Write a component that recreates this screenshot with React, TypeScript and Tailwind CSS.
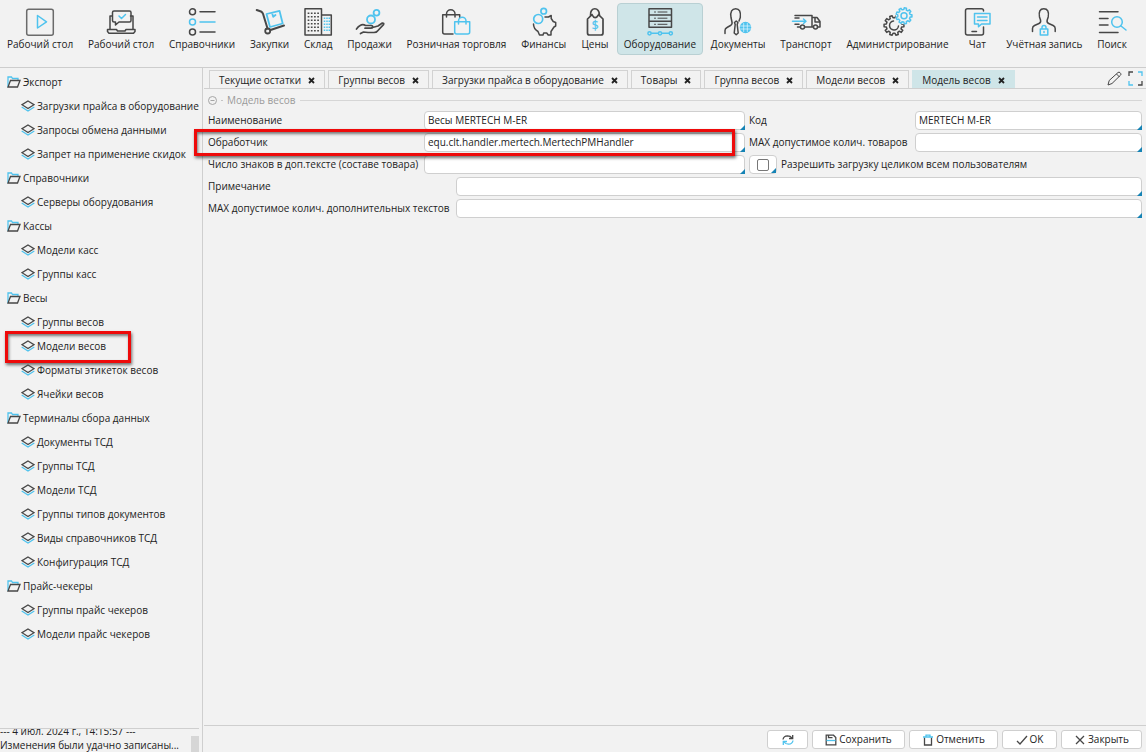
import { ReactNode } from "react";
import clsx from "clsx";

const DARK = "#474747";
const BLUE = "#4fc3ee";

const gearPath = (cx: number, cy: number, r: number, teeth: number) => {
  const inner = r * 0.78;
  const step = (Math.PI * 2) / teeth;
  const points: string[] = [];
  for (let i = 0; i < teeth; i++) {
    const a = i * step;
    [
      [inner, -0.3],
      [r, -0.2],
      [r, 0.2],
      [inner, 0.3],
    ].forEach(([radius, shift]) => {
      const t = a + shift * step;
      points.push(
        `${(cx + radius * Math.cos(t)).toFixed(2)} ${(cy + radius * Math.sin(t)).toFixed(2)}`
      );
    });
  }
  return `M${points.join("L")}Z`;
};

const ToolIcon = ({ children }: { children: ReactNode }) => (
  <svg
    viewBox="0 0 28 28"
    className="h-7 w-7 overflow-visible"
    fill="none"
    stroke={DARK}
    strokeWidth="1.5"
    strokeLinecap="round"
    strokeLinejoin="round"
    aria-hidden="true"
  >
    {children}
  </svg>
);

interface ITool {
  label: string;
  icon: ReactNode;
  active?: boolean;
}

const tools: ITool[] = [
  {
    label: "Рабочий стол",
    icon: (
      <>
        <rect x="0.7" y="1.2" width="26.6" height="26" rx="2" stroke="#6b6b6b" />
        <path d="M11.5 7.5v12.5l9-6.2z" stroke={BLUE} />
      </>
    ),
  },
  {
    label: "Рабочий стол",
    icon: (
      <>
        <path d="M5 8H3v13M23.5 8H26v13M.5 21.5h9l1 1.5h7.500l1-1.500H28v2L26.500 25.300H2L.5 23.500z" />
        <path d="M7 3h15.500q1.500 0 1.500 1.500v8q0 1.500-1.500 1.500H12l-3.500 3v-3H7q-1.500 0-1.500-1.500v-8Q5.500 3 7 3z" />
        <path d="M12 8l2.500 2.500L18.500 6.500" stroke={BLUE} />
      </>
    ),
  },
  {
    label: "Справочники",
    icon: (
      <>
        <circle cx="4.500" cy="3.800" r="3" />
        <path d="M12 3.800h15" />
        <circle cx="4.500" cy="13.900" r="3" stroke={BLUE} />
        <path d="M12 13.900h15" stroke={BLUE} />
        <circle cx="4.500" cy="24" r="3" />
        <path d="M12 24h15" />
      </>
    ),
  },
  {
    label: "Закупки",
    icon: (
      <>
        <path d="M.7 2L5 3.500q1.500.7 2 2.200L11.500 20.500M14.500 22L28 17.500" strokeWidth="2" />
        <circle cx="11.700" cy="23" r="2.500" strokeWidth="1.800" />
        <path d="M10.500 6l13-3.200 3.200 12.700L14 19zM16 4.800l1.200 4 2.300-1.800" stroke={BLUE} strokeWidth="1.800" />
      </>
    ),
  },
  {
    label: "Склад",
    icon: (
      <>
        <path d="M1 .7h16.500v26.300H1zM17.500 7h9.800v20h-9.800" />
        <path
          d="M4.500 4.500v19M7.700 4.500v19M10.900 4.500v19M14.100 4.500v19"
          strokeDasharray="1.500 2"
          strokeLinecap="butt"
          strokeWidth="1.700"
        />
        <path
          d="M20.500 9.500v15M23 9.500v15M25.300 9.500v15"
          stroke={BLUE}
          strokeDasharray="1.500 1.500"
          strokeLinecap="butt"
        />
      </>
    ),
  },
  {
    label: "Продажи",
    icon: (
      <>
        <circle cx="20.500" cy="4.700" r="2.900" stroke={BLUE} strokeWidth="1.800" />
        <circle cx="15" cy="11.500" r="4" stroke={BLUE} strokeWidth="1.800" />
        <path
          d="M.5 21C4 16.500 7 16 9.500 17.500H15q1.800 0 1.700 1.500-.2 1.200-2 1.200H9M16.500 19.500L22 18l4-2.800q2.500-.5 1.500 1.500L21.500 23q-1 1.500-3.500 1.500h-6L7.500 24l-3 1.500"
          strokeWidth="1.700"
        />
      </>
    ),
  },
  {
    label: "Розничная торговля",
    icon: (
      <>
        <path d="M11 26H2.500Q.7 26 .7 24V6.700h17V9.500M4.500 9V6a4.200 4.200 0 018.500 0v3" />
        <path d="M12.700 13.700h15V24q0 2-2 2H14.700q-2 0-2-2zM16.500 16v-3a3.700 3.700 0 017.500 0v3" stroke={BLUE} />
      </>
    ),
  },
  {
    label: "Финансы",
    icon: (
      <>
        <circle cx="13.700" cy="3.200" r="2.800" stroke={BLUE} strokeWidth="1.700" />
        <circle cx="8.200" cy="11" r="4.500" stroke={BLUE} strokeWidth="1.700" />
        <path d="M3.500 16c0 4 2 6 4.500 7.500l1.500 3.500H13l.7-2h3l1.500 2H21v-3.500l3-4.500 1.700-1v-3.500l-2.500-1-2-3V7.500L18.500 9H15" />
      </>
    ),
  },
  {
    label: "Цены",
    icon: (
      <>
        <path
          d="M11 6.700L6.500 11v14q0 2 2 2h11.500q2 0 2-2V11l-4.500-4.300M11 6.700q3 6 6.500 0M9.500 7.500C8.500-1.500 19-1.500 18.500 7.500"
          strokeWidth="1.700"
        />
        <text
          x="14.200"
          y="22"
          textAnchor="middle"
          fontSize="12"
          fontFamily="Open Sans"
          fill={BLUE}
          stroke={BLUE}
          strokeWidth="0.300"
        >
          $
        </text>
      </>
    ),
  },
  {
    label: "Оборудование",
    active: true,
    icon: (
      <>
        <path d="M3 .7h22.500v18.600H3zM3 7h22.500M3 13.200h22.500" />
        <path d="M8.500 4h1M12 4h9M8.500 10.200h1M12 10.200h9M8.500 16.300h1M12 16.300h9" strokeWidth="1" />
        <path d="M3 25.300h22.500" stroke={BLUE} />
        <g fill="#cfe5e8" stroke={BLUE}>
          <circle cx="3.500" cy="25.300" r="1.600" />
          <circle cx="14" cy="25.300" r="1.600" />
          <circle cx="24.800" cy="25.300" r="1.600" />
        </g>
      </>
    ),
  },
  {
    label: "Документы",
    icon: (
      <>
        <path d="M1 25.500v-3q0-2 2-3l3.500-2q2-1 1.500-3.500L7 9.500C6 3.500 8 .7 11.700.7S17 3.500 16.300 9.500L15 13M10.500 14.500l1.700-1.500 1.700 1.500-.7 2 1 8.500-2 1.700-2-1.700 1-8.500z" />
        <circle cx="21.500" cy="19.500" r="5" fill={BLUE} stroke={BLUE} />
        <path d="M16.500 18h10M16.500 21h10M19.700 15.500v8M23.300 15.500v8" stroke="#e8f7fd" strokeWidth="0.700" />
      </>
    ),
  },
  {
    label: "Транспорт",
    icon: (
      <>
        <path d="M3 7.500h17v11.500h-7M3 10h4M3 16.300h4M5.500 19H8M20.500 9.500H25l3 4v5.500h-2.500M21 19h-1M23 10v4h4.500" />
        <circle cx="10.500" cy="19" r="2" />
        <circle cx="23.500" cy="19" r="2" />
        <path d="M.5 13.200h13M11.500 11l2.500 2.200-2.500 2.300" stroke={BLUE} />
      </>
    ),
  },
  {
    label: "Администрирование",
    icon: (
      <>
        <path d={gearPath(10, 17.5, 10, 10)} />
        <path d="M9.500 13a4.500 4.500 0 105 5" />
        <circle cx="20" cy="7.800" r="8.500" fill="#f2f2f2" stroke="none" />
        <path d={gearPath(20, 7.8, 8, 9)} stroke={BLUE} />
        <circle cx="20" cy="7.800" r="3" stroke={BLUE} />
      </>
    ),
  },
  {
    label: "Чат",
    icon: (
      <>
        <path d="M20.500 3V2.500Q20.500.7 18.500.7h-14q-2 0-2 2V25q0 2 2 2h14q2 0 2-2v-6M9 23.500h4.500" />
        <path d="M11.500 5.500h15.500v10.500H18.500l-3 2.800V16h-4zM14.500 9h9.500M14.500 12.500h9.500" stroke={BLUE} />
      </>
    ),
  },
  {
    label: "Учётная запись",
    icon: (
      <>
        <path d="M2.500 23.500v-3q0-2 2-3l4.500-2q2.200-1 1.500-3.500L9.500 9C8.500 3.500 10 .7 13.800.7S19.200 3.500 18.200 9l-1 3q-.7 2.500 1.500 3.500l4.500 2q2 1 2 3v3" />
        <path d="M10.300 21h7.500v6h-7.500zM12 21v-1.500a2 2 0 014 0V21M14 23.500v1" stroke={BLUE} />
      </>
    ),
  },
  {
    label: "Поиск",
    icon: (
      <>
        <path d="M1.500 3.700H20M1.500 10.500H10M1.500 17H10M1.500 24.500H20" />
        <circle cx="19" cy="14" r="5.300" stroke={BLUE} />
        <path d="M23 18l5 4" stroke={BLUE} />
      </>
    ),
  },
];

const menu = [
  {
    title: "Экспорт",
    items: ["Загрузки прайса в оборудование", "Запросы обмена данными", "Запрет на применение скидок"],
  },
  { title: "Справочники", items: ["Серверы оборудования"] },
  { title: "Кассы", items: ["Модели касс", "Группы касс"] },
  { title: "Весы", items: ["Группы весов", "Модели весов", "Форматы этикеток весов", "Ячейки весов"] },
  {
    title: "Терминалы сбора данных",
    items: [
      "Документы ТСД",
      "Группы ТСД",
      "Модели ТСД",
      "Группы типов документов",
      "Виды справочников ТСД",
      "Конфигурация ТСД",
    ],
  },
  { title: "Прайс-чекеры", items: ["Группы прайс чекеров", "Модели прайс чекеров"] },
];

const tabs = [
  "Текущие остатки",
  "Группы весов",
  "Загрузки прайса в оборудование",
  "Товары",
  "Группа весов",
  "Модели весов",
  "Модель весов",
];

const FolderIcon = () => (
  <svg viewBox="0 0 14 12" className="h-3 w-3.5 shrink-0" fill="none" strokeWidth="1.3" aria-hidden="true">
    <path d="M1 11V1h3.500l1 1.500h5.500V4" stroke={BLUE} />
    <path d="M3.500 4.500h9.500L10.500 11H1z" stroke={DARK} />
  </svg>
);

const LayersIcon = () => (
  <svg viewBox="0 0 14 12" className="h-3 w-3.5 shrink-0" fill="none" strokeWidth="1.3" aria-hidden="true">
    <path d="M.7 7L7 11l6.300-4" stroke={BLUE} />
    <path d="M7 1L13 4.700 7 8.500 1 4.700z" stroke={DARK} />
  </svg>
);

// red frame that points at a place on the form
const Highlight = ({ className }: { className: string }) => (
  <span
    className={clsx(
      "pointer-events-none absolute border-[3px] border-[#ee0a0a] shadow-[1px_2px_3px_rgba(0,0,0,0.55),inset_1px_2px_3px_rgba(0,0,0,0.5)]",
      className
    )}
  />
);

const Corner = () => (
  <span className="absolute right-0 bottom-0 h-[5px] w-[5px] bg-[#1583b5] [clip-path:polygon(100%_0,100%_100%,0_100%)]" />
);

interface IField {
  id: string;
  label: string;
  value?: string;
}

const Field = ({ id, label, value }: IField) => (
  <>
    <label htmlFor={id} className="whitespace-nowrap">
      {label}
    </label>
    <div className="relative min-w-0">
      <input
        id={id}
        type="text"
        defaultValue={value}
        className="block h-[19px] w-full rounded-sm border border-[#cfcfcf] bg-white px-[3px] pb-0.5 outline-none"
      />
      <Corner />
    </div>
  </>
);

const Toolbar = () => (
  <nav className="flex h-[68px] shrink-0 items-start justify-between border-b border-[#cdcdcd] pt-[3px] pr-3">
    {tools.map((tool, i) => (
      <button
        key={i}
        type="button"
        className={clsx(
          "flex h-[52px] shrink-0 flex-col items-center rounded-sm border px-1.5 pt-1 whitespace-nowrap",
          tool.active ? "border-[#b9d0d3] bg-[#cfe5e8]" : "border-transparent"
        )}
      >
        <ToolIcon>{tool.icon}</ToolIcon>
        <span className="leading-4">{tool.label}</span>
      </button>
    ))}
  </nav>
);

const Sidebar = () => (
  <aside className="flex w-[203px] shrink-0 flex-col border-r border-[#cfcfcf]">
    <nav className="mr-[3px] grow overflow-hidden pt-0.5">
      {menu.map((group) => (
        <div key={group.title}>
          <button type="button" className="flex h-6 items-center gap-0.5 pl-[7px] whitespace-nowrap">
            <FolderIcon />
            {group.title}
          </button>
          <ul>
            {group.items.map((item) => (
              <li key={item} className="relative">
                <a href="#" className="flex h-6 items-center gap-0.5 pl-[21px] whitespace-nowrap">
                  <LayersIcon />
                  {item}
                </a>
                {item === "Модели весов" && <Highlight className="-top-[3px] left-[5px] h-8 w-[126px]" />}
              </li>
            ))}
          </ul>
        </div>
      ))}
    </nav>
    <div className="mr-[3px] flex h-6 shrink-0 items-end justify-between border-t border-[#cfcfcf]">
      <div className="flex h-full flex-col justify-end overflow-hidden leading-[14px] whitespace-nowrap">
        <p>--- 4 июл. 2024 г., 14:15:57 ---</p>
        <p>Изменения были удачно записаны...</p>
      </div>
      <span className="h-4 w-2 bg-[#d6d6d6]" />
    </div>
  </aside>
);

const TabBar = () => (
  <div className="flex h-[21px] shrink-0 items-end border-b border-[#cfcfcf] pr-[3px] pl-[5px]">
    <div className="flex grow gap-[3px]">
      {tabs.map((tab, i) => (
        <div
          key={tab}
          className={clsx(
            "flex h-[18px] items-center gap-[7px] border border-b-0 px-[9px] pt-px whitespace-nowrap",
            i === tabs.length - 1 ? "border-[#cfe5e8] bg-[#cfe5e8]" : "border-[#d2d2d2]"
          )}
        >
          <button type="button">{tab}</button>
          <button type="button" aria-label={`Закрыть ${tab}`}>
            <svg viewBox="0 0 7 7" className="h-[7px] w-[7px]" stroke="#222" strokeWidth="1.800" aria-hidden="true">
              <path d="M1 1l5 5M6 1L1 6" />
            </svg>
          </button>
        </div>
      ))}
    </div>
    <div className="flex items-center gap-1.5 pb-0.5">
      <button type="button" aria-label="Редактировать">
        <svg viewBox="0 0 15 15" className="h-[15px] w-[15px]" fill="none" stroke={DARK} aria-hidden="true">
          <path d="M1 14l1.200-4.500L11 1.500q1-.8 2 .1l.6.7q.8 1-.1 1.900L5 12.500zM9.500 3l3 3" />
        </svg>
      </button>
      <button type="button" aria-label="На весь экран">
        <svg viewBox="0 0 15 15" className="h-[15px] w-[15px]" fill="none" strokeWidth="1.300" aria-hidden="true">
          <path d="M1 5V1h4M10 14h4v-4" stroke={DARK} />
          <path d="M10 1h4v4M1 10v4h4" stroke={BLUE} />
        </svg>
      </button>
    </div>
  </div>
);

const ModelForm = () => (
  <form className="grow px-1">
    <div className="flex h-[22px] items-center gap-1 pt-px text-[#9a9a9a]">
      <button type="button" aria-label="Свернуть" className="flex items-center">
        <svg viewBox="0 0 9 9" className="h-[9px] w-[9px]" fill="none" stroke="#a5a5a5" aria-hidden="true">
          <circle cx="4.500" cy="4.500" r="4" />
          <path d="M2.500 4.500h4" />
        </svg>
      </button>
      <span className="w-0.5 border-t border-[#c4c4c4]" />
      <h2>Модель весов</h2>
      <span className="grow border-t border-[#d6d6d6]" />
    </div>
    <div className="grid grid-cols-[212px_321fr_162px_227fr] items-center gap-x-1 gap-y-[3px]">
      <Field id="name" label="Наименование" value="Весы MERTECH M-ER" />
      <Field id="code" label="Код" value="MERTECH M-ER" />
      <div className="relative col-span-2 grid grid-cols-subgrid items-center">
        <Field id="handler" label="Обработчик" value="equ.clt.handler.mertech.MertechPMHandler" />
        <Highlight className="-inset-y-1 right-2.5 -left-3.5 z-10" />
      </div>
      <Field id="max-goods" label="MAX допустимое колич. товаров" />
      <Field id="chars" label="Число знаков в доп.тексте (составе товара)" />
      <div className="col-span-2 flex items-center gap-1">
        <span className="relative flex h-[19px] w-7 items-center justify-center rounded-sm border border-[#cfcfcf] bg-white">
          <input
            id="allow-all"
            type="checkbox"
            className="h-3 w-3 appearance-none rounded-[2px] border border-[#777] bg-white checked:bg-[#1583b5]"
          />
          <Corner />
        </span>
        <label htmlFor="allow-all">Разрешить загрузку целиком всем пользователям</label>
      </div>
    </div>
    <div className="mt-[3px] grid grid-cols-[244px_1fr] items-center gap-x-1 gap-y-[3px]">
      <Field id="note" label="Примечание" />
      <Field id="max-texts" label="MAX допустимое колич. дополнительных текстов" />
    </div>
  </form>
);

const ActionButton = ({ children, className, label }: { children: ReactNode; className: string; label?: string }) => (
  <button
    type="button"
    aria-label={label}
    className={clsx(
      "flex h-[19px] items-center justify-center gap-0.5 rounded-[3px] border border-[#cfcfcf] bg-white whitespace-nowrap",
      className
    )}
  >
    {children}
  </button>
);

const ActionIcon = ({ children }: { children: ReactNode }) => (
  <svg viewBox="0 0 12 12" className="h-3 w-3" fill="none" stroke={DARK} strokeWidth="1.300" aria-hidden="true">
    {children}
  </svg>
);

const Footer = () => (
  <footer className="flex h-[27px] shrink-0 justify-end gap-1 border-t border-[#cfcfcf] px-1 pt-1">
    <ActionButton className="w-[41px]" label="Обновить">
      <ActionIcon>
        <path d="M1 5.500Q1.500 2 5.500 1.800q3 0 4.500 2.200M10.700 1v3.500H7" stroke={DARK} />
        <path d="M11 6.500Q10.500 10 6.500 10.200q-3 0-4.500-2.200M1.300 11V7.500H5" stroke={BLUE} />
      </ActionIcon>
    </ActionButton>
    <ActionButton className="w-[93px]">
      <ActionIcon>
        <path d="M1.200 1.200h7.300L10.800 3.500v7.300H1.200zM3.500 1.200v2.500h4" />
        <path d="M1.500 6.500h9" stroke={BLUE} />
      </ActionIcon>
      Сохранить
    </ActionButton>
    <ActionButton className="w-[89px]">
      <ActionIcon>
        <path d="M2.500 3.500v7.500h7V3.500" />
        <path d="M1 3h10M4 2.800V1.200h4v1.600" stroke={BLUE} />
      </ActionIcon>
      Отменить
    </ActionButton>
    <ActionButton className="w-[55px]">
      <ActionIcon>
        <path d="M1 7l3 3L11 2" />
      </ActionIcon>
      OK
    </ActionButton>
    <ActionButton className="w-[81px]">
      <ActionIcon>
        <path d="M2 2l8 8M10 2l-8 8" />
      </ActionIcon>
      Закрыть
    </ActionButton>
  </footer>
);

const App = () => {
  return (
    <div className="flex h-screen flex-col overflow-hidden bg-[#f2f2f2] font-['Open_Sans',sans-serif] text-[10px] text-[#222]">
      <Toolbar />
      <div className="flex min-h-0 grow">
        <Sidebar />
        <main className="flex min-w-0 grow flex-col pl-px">
          <TabBar />
          <ModelForm />
          <Footer />
        </main>
      </div>
    </div>
  );
};

export default App;
